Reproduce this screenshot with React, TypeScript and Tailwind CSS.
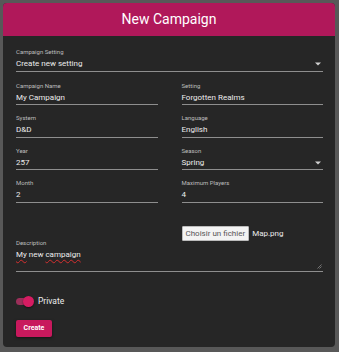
import React from "react";

const Caret = () => (
  <svg width="6" height="4" viewBox="0 0 6 4" className="absolute right-[2px] top-[6px]">
    <path d="M0 0.5 L6 0.5 L3 3.5 Z" fill="#d0d0d0" />
  </svg>
);

function Field({ label, value, select }: { label: string; value: string; select?: boolean }) {
  return (
    <div className="flex flex-col">
      <div className="h-[9px] text-[6px] leading-[9px] text-[#bdbdbd]">{label}</div>
      <div className="relative h-[15.5px] border-b-[1.5px] border-[#8e8e8e] text-[8px] leading-[15px] text-[#ececec]">
        {value}
        {select && <Caret />}
      </div>
    </div>
  );
}

export default function App() {
  return (
    <div
      className="w-[339px] h-[352px] bg-[#585858] pl-[3px] pt-[3px] pr-[4px] pb-[5px]"
      style={{ fontFamily: "Roboto, 'Noto Sans', sans-serif" }}
    >
      <div className="h-full flex flex-col rounded-[4px] overflow-hidden bg-[#262626]">
        <div className="h-[33px] shrink-0 bg-[#b0185a] flex items-center justify-center text-[14px] text-white">
          New Campaign
        </div>
        <div className="flex flex-col pl-[13px] pr-[12px] pt-[11px]">
          <Field label="Campaign Setting" value="Create new setting" select />
          <div className="grid grid-cols-2 gap-x-[24px] gap-y-[8px] mt-[9px]">
            <Field label="Campaign Name" value="My Campaign" />
            <Field label="Setting" value="Forgotten Realms" />
            <Field label="System" value="D&D" />
            <Field label="Language" value="English" />
            <Field label="Year" value="257" />
            <Field label="Season" value="Spring" select />
            <Field label="Month" value="2" />
            <Field label="Maximum Players" value="4" />
          </div>
          <div className="grid grid-cols-2 gap-x-[24px] mt-[23.5px] h-[21px]">
            <div className="flex items-end">
              <div className="text-[6px] leading-[9px] text-[#bdbdbd]">Description</div>
            </div>
            <div className="flex items-start">
              <div className="h-[15px] px-[3px] bg-[#f3f3f3] border border-[#bbbbbb] text-[8px] leading-[13px] text-[#555] rounded-[1px]">
                Choisir un fichier
              </div>
              <span className="ml-[3px] text-[8px] leading-[15px] text-[#ececec]">Map.png</span>
            </div>
          </div>
          <div className="relative h-[25px] border-b-[1.5px] border-[#8e8e8e] text-[8px] leading-[16px] text-[#ececec]">
            <span className="underline decoration-wavy decoration-[#d32f2f] decoration-[1px] underline-offset-[2px]">My</span>{" "}
            new{" "}
            <span className="underline decoration-wavy decoration-[#d32f2f] decoration-[1px] underline-offset-[2px]">campaign</span>
            <svg width="5" height="5" viewBox="0 0 5 5" className="absolute right-[1px] bottom-[2px]">
              <path d="M4.5 0.5 L0.5 4.5 M4.5 2.5 L2.5 4.5" stroke="#888" strokeWidth="0.8" />
            </svg>
          </div>
          <div className="flex items-center mt-[23px] h-[12px]">
            <div className="relative w-[17px] h-[7px] rounded-full bg-[#9c2f5a]">
              <div className="absolute right-[-1px] top-[-2px] w-[11px] h-[11px] rounded-full bg-[#d61c62] shadow-[0_1px_2px_rgba(0,0,0,0.5)]" />
            </div>
            <span className="ml-[5px] text-[8.5px] text-[#ececec]">Private</span>
          </div>
          <div className="mt-[6px]">
            <button className="w-[36px] h-[17px] rounded-[2px] bg-[#c8195d] text-white text-[7px] font-bold shadow-[0_1px_3px_rgba(0,0,0,0.5)]">
              Create
            </button>
          </div>
        </div>
      </div>
    </div>
  );
}
